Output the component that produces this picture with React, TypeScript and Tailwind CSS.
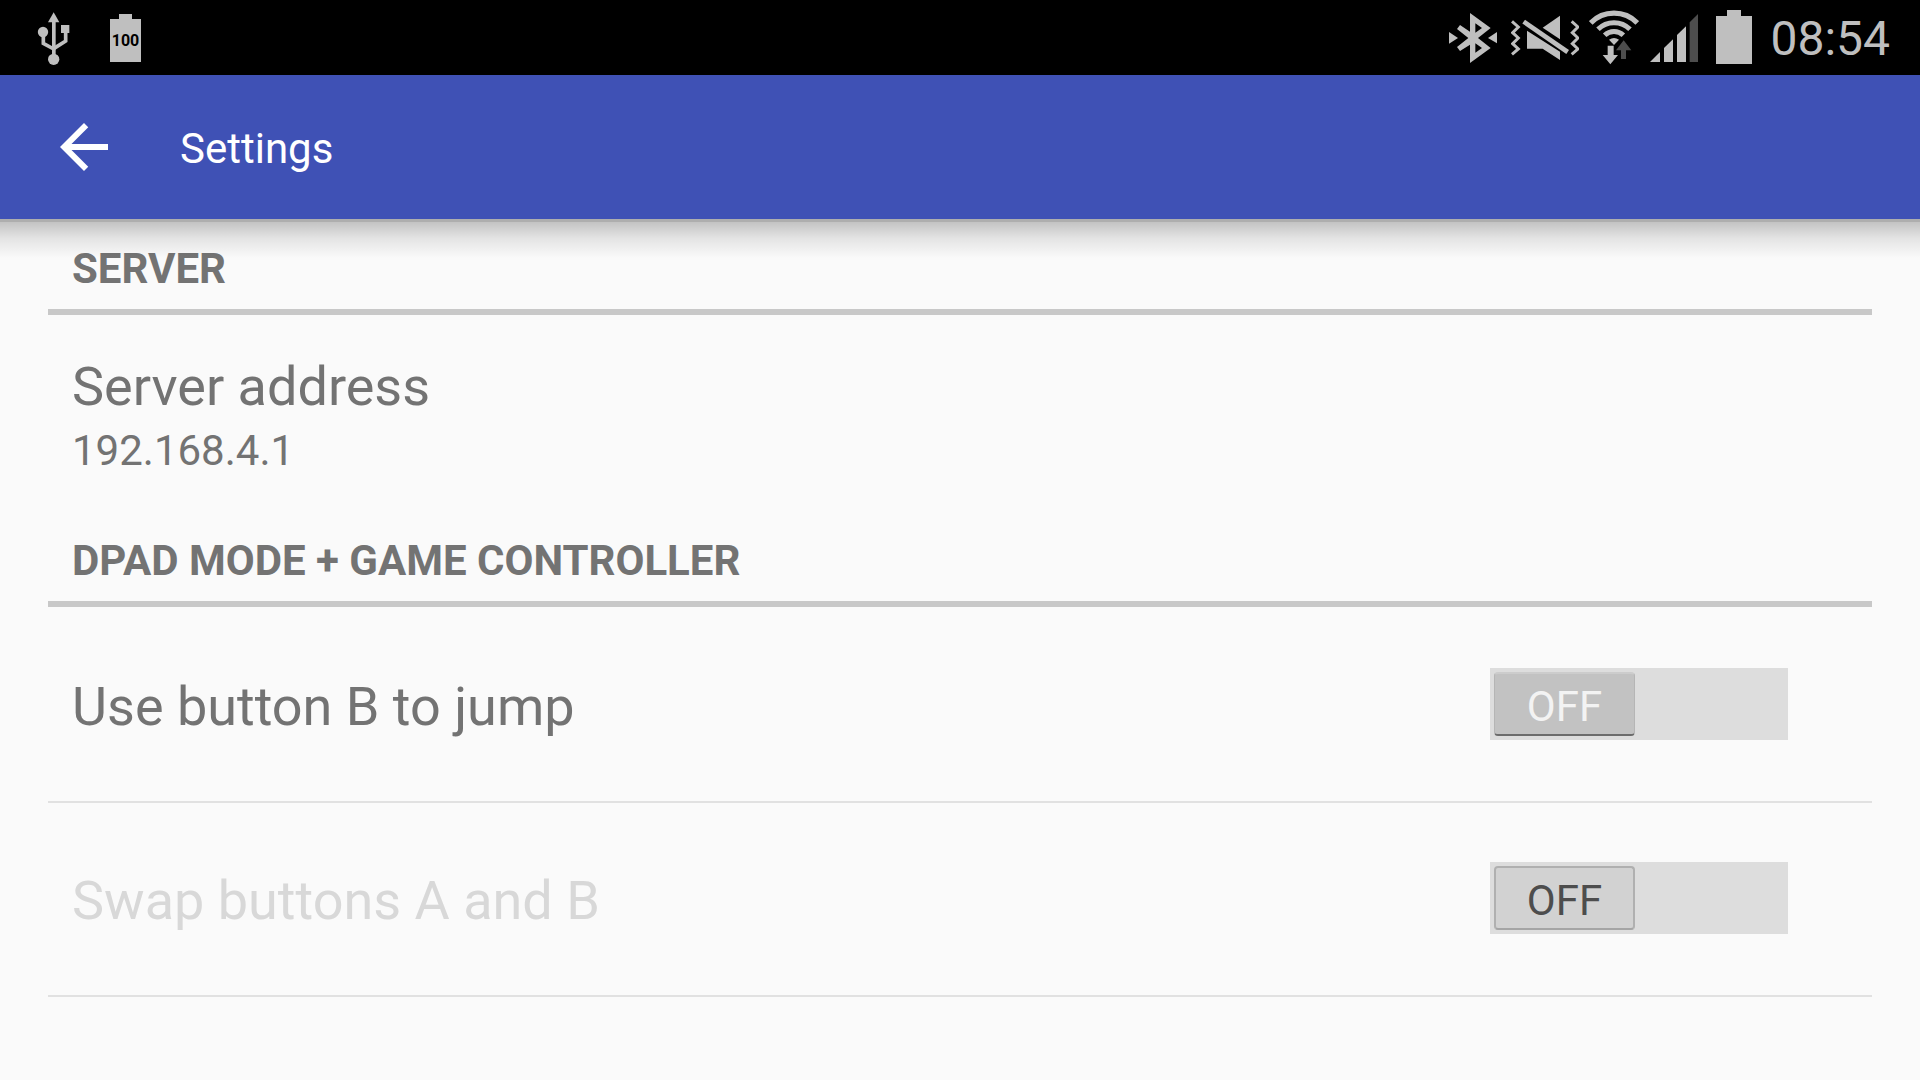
import { useState } from "react";

const GREY = "#bfbfbf";
const DIM = "#4d4d4d";

function UsbIcon() {
  return (
    <svg className="h-[75px] w-[33px]" viewBox="51 0 99 225" fill={GREY} aria-hidden="true">
      <path d="M101 37 L118 67 H84 Z" />
      <rect x="96" y="64" width="11" height="105" />
      <circle cx="101" cy="178" r="17" />
      <circle cx="69" cy="96" r="15.5" />
      <rect x="123" y="75" width="25" height="24" />
      <path d="M70 100 V130 L101 147 M137 96 V123 L101 146" fill="none" stroke={GREY} strokeWidth="11" />
    </svg>
  );
}

function BluetoothIcon() {
  return (
    <svg className="h-[75px] w-[48px]" viewBox="57 0 144 225" fill={GREY} aria-hidden="true">
      <path d="M57 96 L84 114 L57 131 Z" />
      <path d="M201 96 V130 L174 114 Z" />
      <path
        fillRule="evenodd"
        d="M120 39 L182 84 L144 114 L182 144 L120 189 V134 L90 153 L81 141 L115 114 L81 87 L90 75 L120 95 Z M136 70 V98 L156 84 Z M136 130 V158 L156 144 Z"
      />
    </svg>
  );
}

function MuteVibrateIcon() {
  return (
    <svg className="h-[75px] w-[68px]" viewBox="243 0 204 225" fill={GREY} aria-hidden="true">
      <path d="M390 47 V118 L338 83 Z" />
      <path d="M291 92 L390 155 V180 L338 146 H291 Z" />
      <path d="M281 65 L413 155" stroke="#000" strokeWidth="22" />
      <path d="M281 65 L413 156" stroke={GREY} strokeWidth="14" />
      <path
        d="M246 64 L265 81 L248 98 L265 114 L248 131 L265 147 L246 163 M425 64 L444 81 L427 98 L444 114 L427 131 L444 147 L425 163"
        fill="none"
        stroke={GREY}
        strokeWidth="9"
      />
    </svg>
  );
}

function WifiIcon() {
  return (
    <svg className="h-[75px] w-[50px]" viewBox="27 0 150 225" fill={GREY} aria-hidden="true">
      <g fill="none" stroke={GREY}>
        <path d="M32 69 A98 98 0 0 1 172 69" strokeWidth="16" />
        <path d="M54 88 A68 68 0 0 1 150 88" strokeWidth="15" />
        <path d="M74 106 A40 40 0 0 1 130 106" strokeWidth="15" />
      </g>
      <path d="M87 119 Q102 109 117 119 L102 135 Z" />
      <path d="M83 137 H101 V165 H114 L91 193 L68 165 H83 Z" />
      <path d="M131 121 L154 151 H138 V177 H123 V151 H108 Z" fill={DIM} />
    </svg>
  );
}

function SignalIcon() {
  return (
    <svg className="h-[75px] w-[48px]" viewBox="210 0 144 225" fill={GREY} aria-hidden="true">
      <path d="M210 186 L240 156 V186 Z" />
      <path d="M252 144 L279 118 V186 H252 Z" />
      <path d="M291 105 L318 79 V186 H291 Z" />
      <path d="M329 67 L354 42 V186 H329 Z" fill={DIM} />
    </svg>
  );
}

function BatteryIcon() {
  return (
    <svg className="h-[75px] w-[36px]" viewBox="48 0 108 225" fill={GREY} aria-hidden="true">
      <path d="M81 30 H123 V48 H156 V192 H48 V48 H81 Z" />
    </svg>
  );
}

function BatteryLevelIcon() {
  return (
    <svg className="h-[75px] w-[31px]" viewBox="0 0 31 75" role="img" aria-label="Battery 100">
      <path d="M9 14 H22 V19 H31 V62 H0 V19 H9 Z" fill={GREY} />
      <text x="15.5" y="46" textAnchor="middle" fill="#000" className="text-[16px] font-bold">
        100
      </text>
    </svg>
  );
}

function StatusBar() {
  return (
    <div className="flex h-[75px] items-center justify-between bg-black pr-[30px] pl-[37px]">
      <div className="flex gap-10">
        <UsbIcon />
        <BatteryLevelIcon />
      </div>
      <div className="flex items-center">
        <div className="flex gap-[14px]">
          <BluetoothIcon />
          <MuteVibrateIcon />
        </div>
        <div className="ml-[10px] flex gap-[11px]">
          <WifiIcon />
          <SignalIcon />
        </div>
        <div className="ml-[18px] flex items-center gap-[18px]">
          <BatteryIcon />
          <time className="pt-[2px] text-[48px] leading-[56px] text-[#bfbfbf]">08:54</time>
        </div>
      </div>
    </div>
  );
}

function AppBar() {
  return (
    <header className="relative flex h-[144px] items-center gap-[60px] bg-[#3f51b5] px-12 text-white">
      <button type="button" aria-label="Back">
        <svg className="size-[72px]" viewBox="0 0 24 24" fill="currentColor" aria-hidden="true">
          <path d="M20 11H7.83l5.59-5.59L12 4l-8 8 8 8 1.41-1.41L7.83 13H20v-2z" />
        </svg>
      </button>
      <h1 className="pt-[4px] text-[42px] leading-[48px]">Settings</h1>
      <div className="pointer-events-none absolute inset-x-0 top-full">
        <div className="h-[3px] bg-black/30" />
        <div className="h-[36px] bg-linear-to-b from-black/22 via-black/9 via-45% to-transparent" />
      </div>
    </header>
  );
}

function Category({ title }: { title: string }) {
  return (
    <h2 className="border-b-[6px] border-[#c8c8c8] px-6 pt-[26px] pb-4 text-[42px] leading-[48px] font-bold text-[#737373]">
      {title}
    </h2>
  );
}

function SwitchRow({ id, title, disabled = false }: { id: string; title: string; disabled?: boolean }) {
  const [on, setOn] = useState(false);
  return (
    <div className="flex min-h-[194px] items-center justify-between border-b-2 border-[#e1e1e1] pr-[84px] pl-6">
      <label
        htmlFor={id}
        className={`pt-[4px] text-[54px] leading-[64px] ${disabled ? "text-[#d8d8d8]" : "text-[#737373]"}`}
      >
        {title}
      </label>
      <label className={`mb-[2px] flex h-[72px] w-[298px] bg-[#dddddd] p-[4px] ${on ? "justify-end" : "justify-start"}`}>
        <input
          id={id}
          type="checkbox"
          role="switch"
          aria-label={title}
          className="sr-only"
          checked={on}
          disabled={disabled}
          onChange={(e) => setOn(e.target.checked)}
        />
        <span
          className={`flex h-[64px] w-[141px] items-center justify-center rounded-[4px] pt-[6px] text-[42px] leading-[48px] ${
            disabled
              ? "border-2 border-[#b0b0b0] border-b-[#a5a5a5] bg-[#d2d2d2] text-[#4d4d4d]"
              : "border border-[#b5b5b5] border-t-2 border-t-[#cccccc] border-b-2 border-b-[#6c6c6c] bg-[#c2c2c2] text-[#f3f3f3]"
          }`}
        >
          {on ? "ON" : "OFF"}
        </span>
      </label>
    </div>
  );
}

export default function App() {
  return (
    <div className="min-h-screen bg-[#fafafa] font-[Roboto,sans-serif]">
      <StatusBar />
      <AppBar />
      <main className="px-12">
        <section>
          <Category title="SERVER" />
          <button type="button" className="flex w-full flex-col gap-2 px-6 pt-10 pb-9 text-left text-[#737373]">
            <span className="text-[54px] leading-[64px]">Server address</span>
            <span className="text-[42px] leading-[48px]">192.168.4.1</span>
          </button>
        </section>
        <section>
          <Category title="DPAD MODE + GAME CONTROLLER" />
          <div className="pt-[2px]">
            <SwitchRow id="jump-b" title="Use button B to jump" />
            <SwitchRow id="swap-ab" title="Swap buttons A and B" disabled />
          </div>
        </section>
      </main>
    </div>
  );
}
